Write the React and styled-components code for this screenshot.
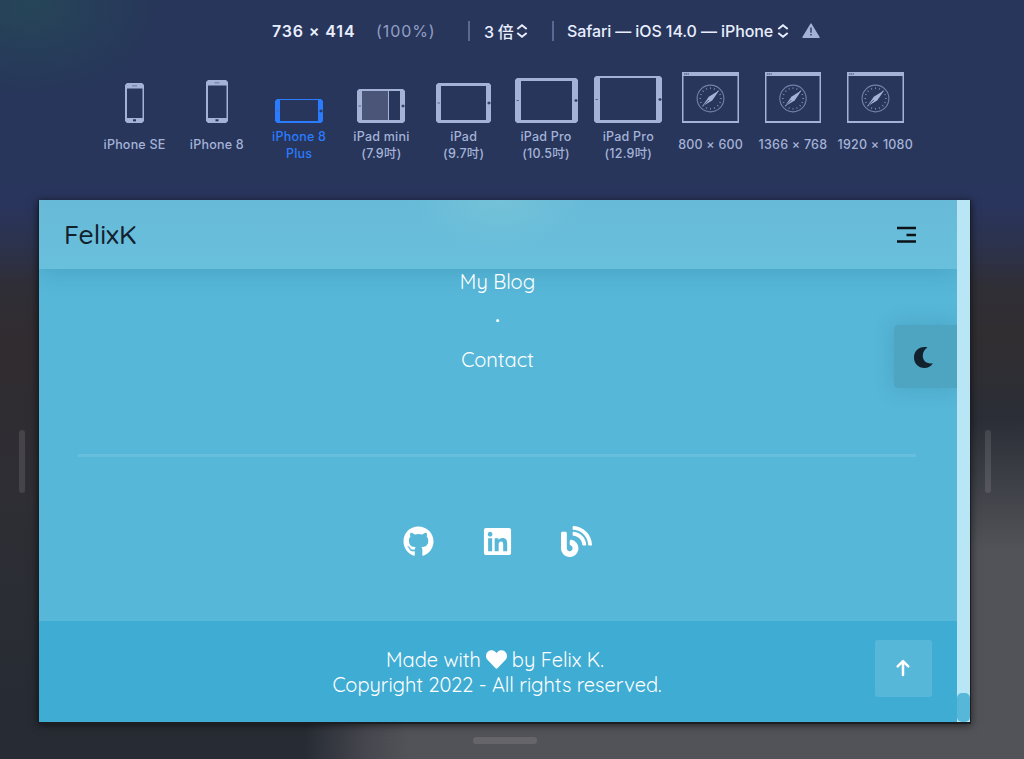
import React from 'react';
import styled, { createGlobalStyle } from 'styled-components';
import { FaGithub, FaLinkedin, FaBlog, FaHeart } from 'react-icons/fa';

const GlobalStyle = createGlobalStyle`
  * { box-sizing: border-box; }
  body { margin: 0; overflow: hidden; }
`;

const Desktop = styled.div`
  width: 1024px;
  height: 759px;
  display: flex;
  flex-direction: column;
  font-family: Inter, "Noto Sans CJK SC", sans-serif;
  color: #a5b2d8;
  background:
    radial-gradient(ellipse 130px 90px at 30px 5px, rgba(38, 72, 88, 0.85), transparent),
    linear-gradient(180deg, #27365a 0, #27365a 150px, #2a355d 205px, rgba(42, 53, 93, 0) 285px),
    linear-gradient(90deg, rgba(82, 83, 88, 0) 305px, #47474f 368px, #525358 410px) 0 100% / 100% 60px no-repeat,
    linear-gradient(180deg, rgba(82, 83, 88, 0) 420px, #525358 550px) 700px 0 / 324px 100% no-repeat,
    linear-gradient(180deg, #2e303c 240px, #312e31 335px, #2b2e37 420px) 700px 0 / 324px 100% no-repeat,
    linear-gradient(180deg, #2e303c 240px, #312c30 340px, #2e2e34 500px, #272c34 700px, #272c34 759px);
`;

const Toolbar = styled.header`
  height: 200px;
  flex: none;
  padding-top: 18px;
`;

const Settings = styled.div`
  height: 26px;
  margin-left: 272px;
  display: flex;
  align-items: center;
  white-space: nowrap;
  font-size: 16px;
`;

const Setting = styled.span`
  width: ${(p) => p.$width}px;
  flex: none;
  display: flex;
  align-items: center;
  color: ${(p) => (p.$muted ? '#929fc8' : '#e9eeff')};
  font-weight: ${(p) => p.$weight || 500};
  letter-spacing: ${(p) => p.$spacing || 0}px;
  svg { margin-left: ${(p) => p.$iconGap || 0}px; flex: none; }
`;

const Divider = styled.span`
  width: 2px;
  height: 20px;
  flex: none;
  margin-right: ${(p) => p.$after}px;
  background: #596892;
`;

const Devices = styled.div`
  width: 823px;
  margin: 26px 0 0 93.4px;
  display: grid;
  grid-template-columns: repeat(10, 1fr);
`;

const Device = styled.div`
  display: flex;
  flex-direction: column;
  align-items: center;
  color: ${(p) => (p.$active ? '#2b7bff' : '#a5b2d8')};
`;

const DeviceArt = styled.div`
  height: 53px;
  display: flex;
  align-items: flex-end;
  svg { display: block; }
`;

const DeviceLabel = styled.div`
  height: 33px;
  margin-top: 6px;
  display: flex;
  align-items: center;
  text-align: center;
  white-space: pre;
  font-size: 12.5px;
  line-height: 16.5px;
  font-weight: 500;
  letter-spacing: 0.22px;
`;

const Stage = styled.div`
  height: 522px;
  flex: none;
  display: flex;
  align-items: center;
`;

const Gutter = styled.div`
  width: ${(p) => p.$width}px;
  flex: none;
  display: flex;
  padding-left: ${(p) => p.$inset}px;
`;

const Grip = styled.span`
  width: ${(p) => (p.$wide ? 64 : 6)}px;
  height: ${(p) => (p.$wide ? 7 : 63)}px;
  border-radius: 3px;
  background: rgba(255, 255, 255, 0.11);
`;

const BottomGutter = styled.div`
  padding: 15px 0 0 473px;
  display: flex;
`;

const Viewport = styled.main`
  width: 931px;
  height: 522px;
  flex: none;
  display: flex;
  background: #57b7d8;
  box-shadow: 0 1px 0 1px #1d1e22, 0 2px 8px 1px rgba(0, 0, 0, 0.6);
`;

const Page = styled.div`
  width: 918px;
  height: 100%;
  display: flex;
  flex-direction: column;
  overflow: hidden;
  position: relative;
  color: #fff;
  font-family: Quicksand, Lato, sans-serif;
  font-weight: 400;
`;

const Nav = styled.nav`
  height: 69px;
  flex: none;
  padding: 0 41px 0 25px;
  display: flex;
  align-items: center;
  justify-content: space-between;
  color: #12212e;
  background: radial-gradient(ellipse 90px 50px at 460px 0, #74c2d8, transparent), linear-gradient(#67bad8, #69c0dc);
  box-shadow: 0 2px 22px rgba(22, 90, 120, 0.24);
`;

const Brand = styled.span`
  font-size: 26.5px;
  font-weight: 500;
  line-height: 30px;
  margin-top: -1px;
`;

const Links = styled.div`
  height: 185px;
  flex: none;
  display: flex;
  flex-direction: column;
  align-items: center;
  font-size: 20px;
  line-height: 39px;
  margin-top: -7px;
  padding-right: 1px;
`;

const Dot = styled.span`
  font-weight: 700;
  line-height: 37px;
  padding-bottom: 2px;
`;

const Rule = styled.hr`
  width: 838px;
  height: 3px;
  flex: none;
  margin: 7px 0 0 39px;
  border: 0;
  background: #68bfdd;
`;

const Socials = styled.div`
  flex: 1;
  display: flex;
  justify-content: center;
  align-items: center;
  padding: 5px 1px 0 0;
  gap: 48px;
  svg { width: 31px; height: 31px; }
`;

const Footer = styled.footer`
  height: 101px;
  flex: none;
  display: flex;
  justify-content: center;
  background: #3facd3;
`;

const Credits = styled.div`
  padding: 26px 2px 0 0;
  display: flex;
  flex-direction: column;
  align-items: center;
  font-size: 20px;
  line-height: 25px;
  white-space: nowrap;
`;

const Credit = styled.div`
  display: flex;
  align-items: center;
  gap: 5px;
  letter-spacing: ${(p) => p.$spacing || 0}px;
  padding-right: ${(p) => p.$shift || 0}px;
`;

const ThemeToggle = styled.button`
  position: absolute;
  right: 0;
  top: 125px;
  width: 63px;
  height: 63px;
  padding: 1px 0 0 20px;
  border: 0;
  border-radius: 4px 0 0 4px;
  display: flex;
  align-items: center;
  color: #12212e;
  background: #4ea5c2;
  box-shadow: 0 0 20px rgba(30, 100, 130, 0.25);
`;

const ScrollTop = styled.button`
  position: absolute;
  right: 25px;
  bottom: 25px;
  width: 57px;
  height: 57px;
  padding: 0 2px 1px 0;
  border: 0;
  border-radius: 3px;
  display: grid;
  place-items: center;
  background: #57b7d8;
`;

const Scrollbar = styled.div`
  width: 13px;
  height: 100%;
  display: flex;
  align-items: flex-end;
  background: #b9e6f4;
`;

const Thumb = styled.span`
  width: 13px;
  height: 29px;
  border-radius: 5px;
  background: #57b7d8;
`;

const Chevrons = () => (
  <svg width="12" height="16" viewBox="0 0 12 16" fill="none" stroke="currentColor" strokeWidth="1.9">
    <path d="M1.3 6 6 2.2 10.7 6M1.3 10 6 13.8 10.7 10" />
  </svg>
);

const Warning = () => (
  <svg width="18" height="16" viewBox="0 0 18 16">
    <path d="M9 1 17 14.3H1Z" fill="#a5b2d8" stroke="#a5b2d8" strokeWidth="1.4" strokeLinejoin="round" />
    <path d="M9 4.5v5.2M9 11v1.6" stroke="#3b4a70" strokeWidth="1.6" />
  </svg>
);

const Phone = ({ w, h }) => (
  <svg width={w} height={h}>
    <path
      fill="currentColor"
      fillRule="evenodd"
      d={`M2 0H${w - 2}L${w} 2V${h - 2}L${w - 2} ${h}H2L0 ${h - 2}V2ZM2 5.5V${h - 5}H${w - 1.5}V5.5Z`}
    />
    <path d={`M${w / 2 - 2.5} 2.8h5`} stroke="#7785ae" strokeWidth="1.3" />
    <rect x={w / 2 - 1.5} y={h - 3.7} width="3" height="2" fill="#27365a" />
  </svg>
);

const Tablet = ({ w, h, side, edge, split }) => (
  <svg width={w} height={h}>
    <path
      fill="currentColor"
      fillRule="evenodd"
      d={`M2 0H${w - 2}L${w} 2V${h - 2}L${w - 2} ${h}H2L0 ${h - 2}V2ZM${side} ${edge}V${h - (edge > 1 ? 3 : 2)}H${w - side}V${edge}Z`}
    />
    {split && <rect x={side} y={edge} width="26" height={h - edge - 3} fill="#4a5578" />}
    {split && <path d={`M31.5 ${edge}V${h - 3}`} stroke="currentColor" />}
    <path d={`M1.5 ${h / 2}h2.5`} stroke="#586791" />
    <path d={`M${w - 3.5} ${h / 2}h3`} stroke="#27365a" strokeWidth="1.5" />
    <path d={`M${w - 2} ${h / 2 - 1.5}v3`} stroke="#27365a" />
  </svg>
);

const ticks = Array.from({ length: 16 }, (_, i) => i * 22.5);

const BrowserWindow = ({ w }) => (
  <svg width={w} height="51" viewBox="0 0 57 51" preserveAspectRatio="none">
    <path fill="currentColor" fillRule="evenodd" d="M0 0H57V51H0ZM1.5 4V49H55.5V4Z" />
    <path d="M2 2h5" stroke="#596892" strokeWidth="1.4" strokeDasharray="1.3 .5" />
    <circle cx="28.5" cy="26.5" r="13.4" fill="none" stroke="#7482ab" strokeWidth="1.1" />
    {ticks.map((a) => (
      <path key={a} d="M28.5 15.3v1.8" stroke="#7482ab" strokeWidth="1" transform={`rotate(${a} 28.5 26.5)`} />
    ))}
    <path d="M37.3 18.3 30.2 28.5 20 34.6 26.8 24.7Z" fill="currentColor" />
    <path d="M26.8 28 21.5 33.3" stroke="#27365a" strokeWidth=".8" />
  </svg>
);

const Menu = () => (
  <svg width="19" height="17" viewBox="0 0 19 17">
    <path d="M0 1.9H19M0 15.5H19" stroke="#0c1318" strokeWidth="2.5" />
    <path d="M9.5 9H19" stroke="#0c1318" strokeWidth="2.5" />
  </svg>
);

const Moon = () => (
  <svg width="19" height="21" viewBox="0 0 19 21">
    <path fill="currentColor" d="M13.5.4C5.5-1.2 0 4 0 10.5 0 16.500 4.500 21 10.300 21 14 21 17.200 19.200 19 16.200 12.500 17.200 8.800 14 8.800 8.800 8.800 5.200 10.500 2.300 13.500.4Z" />
  </svg>
);

const ArrowUp = () => (
  <svg width="16" height="18" viewBox="0 0 16 18" fill="none" stroke="#fff" strokeWidth="2.5" strokeLinecap="round" strokeLinejoin="round">
    <path d="M8 16V2.3M2.7 7.4 8 2.1l5.3 5.3" />
  </svg>
);

const devices = [
  { label: 'iPhone SE', art: <Phone w={19} h={40} /> },
  { label: 'iPhone 8', art: <Phone w={22} h={43} /> },
  { label: 'iPhone 8\nPlus', active: true, art: <Tablet w={48} h={24} side={5} edge={1} /> },
  { label: 'iPad mini\n(7.9吋)', art: <Tablet w={48} h={34} side={5} edge={2} split /> },
  { label: 'iPad\n(9.7吋)', art: <Tablet w={55} h={40} side={5} edge={3} /> },
  { label: 'iPad Pro\n(10.5吋)', art: <Tablet w={63} h={45} side={6} edge={3} /> },
  { label: 'iPad Pro\n(12.9吋)', art: <Tablet w={68} h={47} side={6} edge={2} /> },
  { label: '800 × 600', art: <BrowserWindow w={57} /> },
  { label: '1366 × 768', art: <BrowserWindow w={56} /> },
  { label: '1920 × 1080', art: <BrowserWindow w={57} /> },
];

export default function App() {
  return (
    <Desktop>
      <GlobalStyle />
      <Toolbar>
        <Settings>
          <Setting $width={104} $weight={600} $spacing={0.85}>736 × 414</Setting>
          <Setting $width={92} $muted $weight={400} $spacing={0.9}>(100%)</Setting>
          <Divider $after={14} />
          <Setting $width={68} $iconGap={3} $spacing={-0.3}>3 倍<Chevrons /></Setting>
          <Divider $after={13} />
          <Setting $width={235} $iconGap={4} $spacing={-0.1}>Safari — iOS 14.0 — iPhone<Chevrons /></Setting>
          <Warning />
        </Settings>
        <Devices>
          {devices.map((d) => (
            <Device key={d.label} $active={d.active}>
              <DeviceArt>{d.art}</DeviceArt>
              <DeviceLabel>{d.label}</DeviceLabel>
            </Device>
          ))}
        </Devices>
      </Toolbar>
      <Stage>
        <Gutter $width={39} $inset={19}><Grip /></Gutter>
        <Viewport>
          <Page>
            <Nav>
              <Brand>FelixK</Brand>
              <Menu />
            </Nav>
            <Links>
              <a>My Blog</a>
              <Dot>·</Dot>
              <a>Contact</a>
            </Links>
            <Rule />
            <Socials>
              <FaGithub />
              <FaLinkedin />
              <FaBlog />
            </Socials>
            <Footer>
              <Credits>
                <Credit $shift={4} $spacing={-0.03}>
                  <span>Made with</span>
                  <FaHeart size={21} />
                  <span>by Felix K.</span>
                </Credit>
                <Credit $spacing={-0.06}>Copyright 2022 - All rights reserved.</Credit>
              </Credits>
            </Footer>
            <ThemeToggle aria-label="Toggle theme"><Moon /></ThemeToggle>
            <ScrollTop aria-label="Back to top"><ArrowUp /></ScrollTop>
          </Page>
          <Scrollbar><Thumb /></Scrollbar>
        </Viewport>
        <Gutter $width={54} $inset={15}><Grip /></Gutter>
      </Stage>
      <BottomGutter><Grip $wide /></BottomGutter>
    </Desktop>
  );
}
